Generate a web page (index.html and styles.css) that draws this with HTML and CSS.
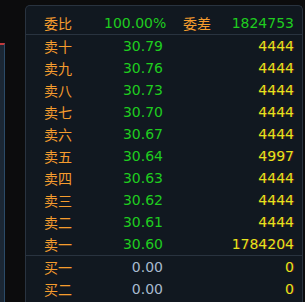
FILE: index.html
```html
<!DOCTYPE html>
<html lang="zh">
<head>
<meta charset="utf-8">
<link rel="stylesheet" href="styles.css">
</head>
<body>
<div class="page">
  <div class="strip"></div>
  <div class="panel">
    <div class="row head">
      <span class="lbl">委比</span>
      <span class="num green">100.00%</span>
      <span class="diff"><span class="lbl">委差</span><span class="num green">1824753</span></span>
    </div>
    <div class="sells">
      <div class="row"><span class="lbl">卖十</span><span class="num green">30.79</span><span class="num vol">4444</span></div>
      <div class="row"><span class="lbl">卖九</span><span class="num green">30.76</span><span class="num vol">4444</span></div>
      <div class="row"><span class="lbl">卖八</span><span class="num green">30.73</span><span class="num vol">4444</span></div>
      <div class="row"><span class="lbl">卖七</span><span class="num green">30.70</span><span class="num vol">4444</span></div>
      <div class="row"><span class="lbl">卖六</span><span class="num green">30.67</span><span class="num vol">4444</span></div>
      <div class="row"><span class="lbl">卖五</span><span class="num green">30.64</span><span class="num vol">4997</span></div>
      <div class="row"><span class="lbl">卖四</span><span class="num green">30.63</span><span class="num vol">4444</span></div>
      <div class="row"><span class="lbl">卖三</span><span class="num green">30.62</span><span class="num vol">4444</span></div>
      <div class="row"><span class="lbl">卖二</span><span class="num green">30.61</span><span class="num vol">4444</span></div>
      <div class="row"><span class="lbl">卖一</span><span class="num green">30.60</span><span class="num vol">1784204</span></div>
    </div>
    <div class="buys">
      <div class="row"><span class="lbl">买一</span><span class="num gray">0.00</span><span class="num vol">0</span></div>
      <div class="row"><span class="lbl">买二</span><span class="num gray">0.00</span><span class="num vol">0</span></div>
    </div>
  </div>
</div>
</body>
</html>
```

FILE: styles.css
```css
html, body {
  margin: 0;
  padding: 0;
  background: #0c0c0d;
  height: 100%;
  overflow: hidden;
}
.page {
  display: flex;
  height: 302px;
  font-family: "DejaVu Sans", Verdana, sans-serif;
  font-size: 14px;
}
.strip {
  margin-top: 43px;
  width: 4px;
  border-top: 2px solid #c23a3c;
  border-right: 1px solid #2b4b68;
  background: #1b2734;
}
.panel {
  flex: 1;
  margin: 5px 2px 0 20px;
  border: 1px solid #29333f;
  border-bottom: none;
  border-radius: 5px 5px 0 0;
  background: #111820;
  padding: 0 8px 0 18px;
}
.row {
  display: grid;
  grid-template-columns: 60px 59px 1fr;
  height: 22px;
  line-height: 22px;
  align-items: center;
}
.head {
  padding-top: 6px;
  border-bottom: 1px solid #29333f;
  margin: 0 -8px 0 -18px;
  padding-left: 18px;
  padding-right: 8px;
}
.buys {
  border-top: 1px solid #29333f;
  margin: 0 -8px 0 -18px;
  padding: 0 8px 0 18px;
}
.lbl {
  font-family: "Noto Sans CJK SC", sans-serif;
  color: #f59c2e;
  font-size: 14px;
}
.num {
  text-align: right;
}
.green { color: #1fcc1f; }
.gray { color: #a8bace; }
.vol {
  color: #e4e41e;
  text-shadow: 1px 0 0 rgba(150, 20, 20, 0.55);
}
.diff {
  display: flex;
  justify-content: space-between;
  padding-left: 20px;
}
```
